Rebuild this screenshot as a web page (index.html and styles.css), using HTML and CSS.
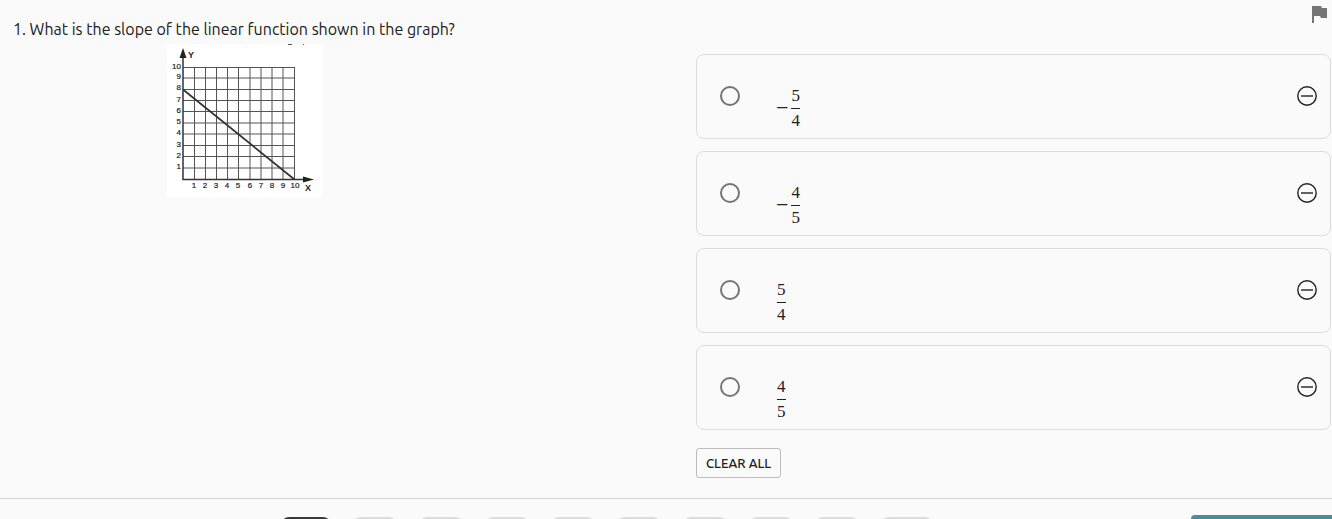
FILE: index.html
```html
<!DOCTYPE html>
<html lang="en">
<head>
<meta charset="utf-8">
<title>Question 1</title>
<meta name="viewport" content="width=device-width, initial-scale=1">
<link rel="stylesheet" href="styles.css">
</head>
<body>
<main class="question">
  <section class="prompt">
    <h1 class="prompt-text" id="prompt">1. What is the slope of the linear function shown in the graph?</h1>
    <svg class="graph" viewBox="0 0 156 154" role="img" aria-label="Line from (0, 8) to (10, 0)">
      <rect width="156" height="154" fill="#fff"/>
      <path d="M121 .5h4M136 .5h1" stroke="#555"/>
      <path class="grid-lines" d="M27.5 23v112M38.5 23v112M49.5 23v112M60.5 23v112M71.5 23v112M83 23v112M94 23v112M105 23v112M116 23v112M127.5 23v112M16 23.5h112M16 34h112M16 45.500h112M16 56.500h112M16 67.500h112M16 79h112M16 90h112M16 101.500h112M16 112.500h112M16 124h112"/>
      <path class="axis" d="M16 8v127.500h126"/>
      <path d="M16 4l3.500 10h-7zM147 135.500l-11 3v-6z" fill="#222"/>
      <path class="plot" d="M16 45.500L127.500 135.500"/>
      <g class="ticks" text-anchor="end">
        <text x="14" y="25">10</text><text x="14" y="35">9</text><text x="14" y="46">8</text><text x="14" y="58">7</text><text x="14" y="69">6</text><text x="14" y="80">5</text><text x="14" y="91">4</text><text x="14" y="103">3</text><text x="14" y="114">2</text><text x="14" y="125">1</text>
      </g>
      <g class="ticks" text-anchor="middle">
        <text x="27" y="144">1</text><text x="38" y="144">2</text><text x="49" y="144">3</text><text x="60" y="144">4</text><text x="71" y="144">5</text><text x="83" y="144">6</text><text x="94" y="144">7</text><text x="105" y="144">8</text><text x="116" y="144">9</text><text x="128" y="144">10</text>
      </g>
      <g class="axis-name" text-anchor="middle"><text x="24" y="14">Y</text><text x="141" y="147">X</text></g>
    </svg>
  </section>

  <section class="answers">
    <div class="toolbar">
      <button class="icon-button" type="button" aria-label="Flag question">
        <svg width="16" height="18" viewBox="0 0 16 18"><path d="M0 1h9l1 2h5v10H9l-1-2H2v7H0z" fill="#757575"/></svg>
      </button>
    </div>
    <form class="choices" aria-labelledby="prompt">
      <div class="choice">
        <input class="radio" type="radio" name="slope" id="a">
        <label class="value" for="a"><span class="sign">−</span><span class="fraction"><span class="numerator">5</span><span>4</span></span></label>
        <button class="icon-button" type="button" aria-label="Eliminate choice 1"><svg width="20" height="20" viewBox="0 0 20 20"><circle class="ring" cx="10" cy="10" r="9.200"/><path class="ring" d="M4 10h12"/></svg></button>
      </div>
      <div class="choice">
        <input class="radio" type="radio" name="slope" id="b">
        <label class="value" for="b"><span class="sign">−</span><span class="fraction"><span class="numerator">4</span><span>5</span></span></label>
        <button class="icon-button" type="button" aria-label="Eliminate choice 2"><svg width="20" height="20" viewBox="0 0 20 20"><circle class="ring" cx="10" cy="10" r="9.200"/><path class="ring" d="M4 10h12"/></svg></button>
      </div>
      <div class="choice">
        <input class="radio" type="radio" name="slope" id="c">
        <label class="value" for="c"><span class="fraction"><span class="numerator">5</span><span>4</span></span></label>
        <button class="icon-button" type="button" aria-label="Eliminate choice 3"><svg width="20" height="20" viewBox="0 0 20 20"><circle class="ring" cx="10" cy="10" r="9.200"/><path class="ring" d="M4 10h12"/></svg></button>
      </div>
      <div class="choice">
        <input class="radio" type="radio" name="slope" id="d">
        <label class="value" for="d"><span class="fraction"><span class="numerator">4</span><span>5</span></span></label>
        <button class="icon-button" type="button" aria-label="Eliminate choice 4"><svg width="20" height="20" viewBox="0 0 20 20"><circle class="ring" cx="10" cy="10" r="9.200"/><path class="ring" d="M4 10h12"/></svg></button>
      </div>
      <button class="clear" type="reset">CLEAR ALL</button>
    </form>
  </section>
</main>
<footer class="footer">
  <nav class="pages" aria-label="Questions">
    <button class="page page-current" type="button" aria-label="Question 1"></button>
    <button class="page" type="button" aria-label="Question 2"></button>
    <button class="page" type="button" aria-label="Question 3"></button>
    <button class="page" type="button" aria-label="Question 4"></button>
    <button class="page" type="button" aria-label="Question 5"></button>
    <button class="page" type="button" aria-label="Question 6"></button>
    <button class="page" type="button" aria-label="Question 7"></button>
    <button class="page" type="button" aria-label="Question 8"></button>
    <button class="page" type="button" aria-label="Question 9"></button>
    <button class="page page-wide" type="button" aria-label="Question 10"></button>
  </nav>
  <button class="next" type="button" aria-label="Next"></button>
</footer>
</body>
</html>
```
FILE: styles.css
```css
* { box-sizing: border-box; }

body {
  margin: 0;
  height: 100vh;
  overflow: hidden;
  background: #fafafa;
  color: #212121;
  font-family: Ubuntu, "Noto Sans", sans-serif;
}

button { font: inherit; color: inherit; cursor: pointer; }

.question {
  display: grid;
  grid-template-columns: minmax(0, 1fr) minmax(0, 1fr);
  gap: 61px;
  padding: 0 1px 20px 0;
}

.prompt { padding: 15px 0 0 13px; }

.prompt-text {
  margin: 0 0 1px;
  font-size: 16px;
  font-weight: 400;
  line-height: 28px;
}

.graph {
  display: block;
  width: 156px;
  margin-left: 154px;
}

.grid-lines { stroke: #555; fill: none; }
.axis { stroke: #333; stroke-width: 1.5; fill: none; }
.plot { stroke: #333; stroke-width: 1.7; }
.ticks { font: 8px "Liberation Sans", sans-serif; fill: #222; stroke: #222; stroke-width: .2; }
.axis-name { font: bold 9px "Liberation Sans", sans-serif; fill: #222; }

.toolbar {
  display: flex;
  justify-content: flex-end;
  height: 54px;
  padding: 5px 3px 0 0;
  align-items: flex-start;
}

.icon-button {
  display: flex;
  padding: 0;
  border: 0;
  background: none;
}

.choices {
  display: flex;
  flex-direction: column;
  align-items: stretch;
  gap: 12px;
}

.choice {
  display: flex;
  align-items: center;
  height: 85px;
  padding: 0 13px 2px 23px;
  border: 1px solid #ddd;
  border-radius: 8px;
}

.radio {
  appearance: none;
  width: 20px;
  height: 20px;
  margin: 0;
  border: 2px solid #757575;
  border-radius: 50%;
}

.radio:checked { box-shadow: inset 0 0 0 3px #fafafa; background: #4a8c9b; }

.value {
  display: flex;
  flex: 1;
  align-items: center;
  gap: 3px;
  padding: 25px 0 0 37px;
  font: 17px/24px "Liberation Serif", serif;
}

.sign { margin-left: -1px; font-size: 22px; }
.fraction { display: flex; flex-direction: column; text-align: center; }
.numerator { border-bottom: 1px solid #212121; }

.ring { fill: none; stroke: #212121; stroke-width: 1.4; }

.clear {
  align-self: flex-start;
  height: 30px;
  margin-top: 6px;
  padding: 0 9px;
  border: 1px solid #bdbdbd;
  border-radius: 3px;
  background: #fafafa;
  font-size: 13px;
  font-weight: 500;
}

.footer {
  display: flex;
  align-items: center;
  justify-content: flex-end;
  gap: 258px;
  padding-top: 16px;
  border-top: 1px solid #d5d5d5;
}

.pages { display: flex; gap: 22px; }

.page {
  width: 44px;
  height: 40px;
  padding: 0;
  border: 0;
  border-radius: 8px;
  background: #ddd;
}

.page-current { width: 50px; background: #3a3a3a; }
.page-wide { width: 52px; }

.next {
  width: 141px;
  height: 44px;
  border: 0;
  border-radius: 4px 0 0 4px;
  background: #4a8c9b;
}
```
